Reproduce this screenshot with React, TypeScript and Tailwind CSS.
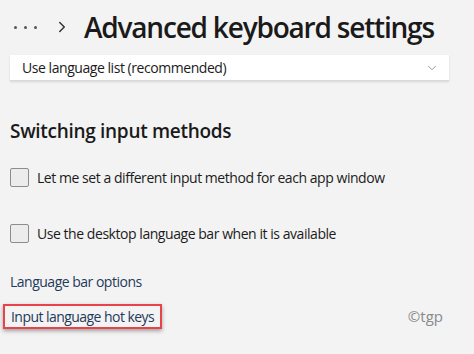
import { ChevronDown, ChevronRight } from "lucide-react";

function Checkbox({ label }: { label: string }) {
  return (
    <label className="flex items-center gap-2">
      <span className="h-[19px] w-[19px] shrink-0 rounded-[2px] border border-[#8c8c8c] bg-[#ececec]" />
      <span className="text-[14px] tracking-[-0.45px] text-[#1b1b1b]">{label}</span>
    </label>
  );
}

export default function App() {
  return (
    <div
      className="h-[354px] w-[474px] overflow-hidden bg-[#f3f3f3] pl-[10px] pr-[25px] pt-[9px]"
      style={{ fontFamily: '"Open Sans", "Noto Sans", sans-serif' }}
    >
      <div className="flex h-[36px] items-center">
        <div className="ml-[4px] flex gap-[7px]">
          <span className="h-[3px] w-[3px] rounded-full bg-[#555]" />
          <span className="h-[3px] w-[3px] rounded-full bg-[#555]" />
          <span className="h-[3px] w-[3px] rounded-full bg-[#555]" />
        </div>
        <ChevronRight className="ml-[16px] h-[18px] w-[18px] text-[#333]" strokeWidth={2} />
        <h1 className="ml-[13px] whitespace-nowrap text-[28px] font-semibold leading-none tracking-[-1.2px] text-[#1a1a1a]">
          Advanced keyboard settings
        </h1>
      </div>

      <div className="mt-[10px] flex h-[26px] items-center justify-between border-b border-[#d9d9d9] bg-white pl-[12px] pr-[10px] shadow-[0_1px_2px_rgba(0,0,0,0.12)]">
        <span className="text-[14px] tracking-[-0.45px] text-[#1b1b1b]">Use language list (recommended)</span>
        <ChevronDown className="h-[14px] w-[14px] text-[#888]" strokeWidth={1.5} />
      </div>

      <h2 className="mt-[37px] text-[19px] font-semibold leading-[26px] tracking-[-0.3px] text-[#1a1a1a]">
        Switching input methods
      </h2>

      <div className="mt-[23px] flex flex-col gap-[35px]">
        <Checkbox label="Let me set a different input method for each app window" />
        <Checkbox label="Use the desktop language bar when it is available" />
      </div>

      <a className="mt-[27px] block text-[14px] tracking-[-0.5px] text-[#1f3a5a]">Language bar options</a>

      <div className="mt-[12px] flex items-center justify-between">
        <a className="-ml-[7px] block border-2 border-[#e8424a] px-[6px] py-[1px] text-[14px] leading-[19px] tracking-[-0.55px] text-[#1f3a5a] shadow-[0_2px_4px_rgba(0,0,0,0.35)]">
          Input language hot keys
        </a>
        <span className="mr-[6px] text-[15px] text-[#8a8a8a]">©tgp</span>
      </div>
    </div>
  );
}
